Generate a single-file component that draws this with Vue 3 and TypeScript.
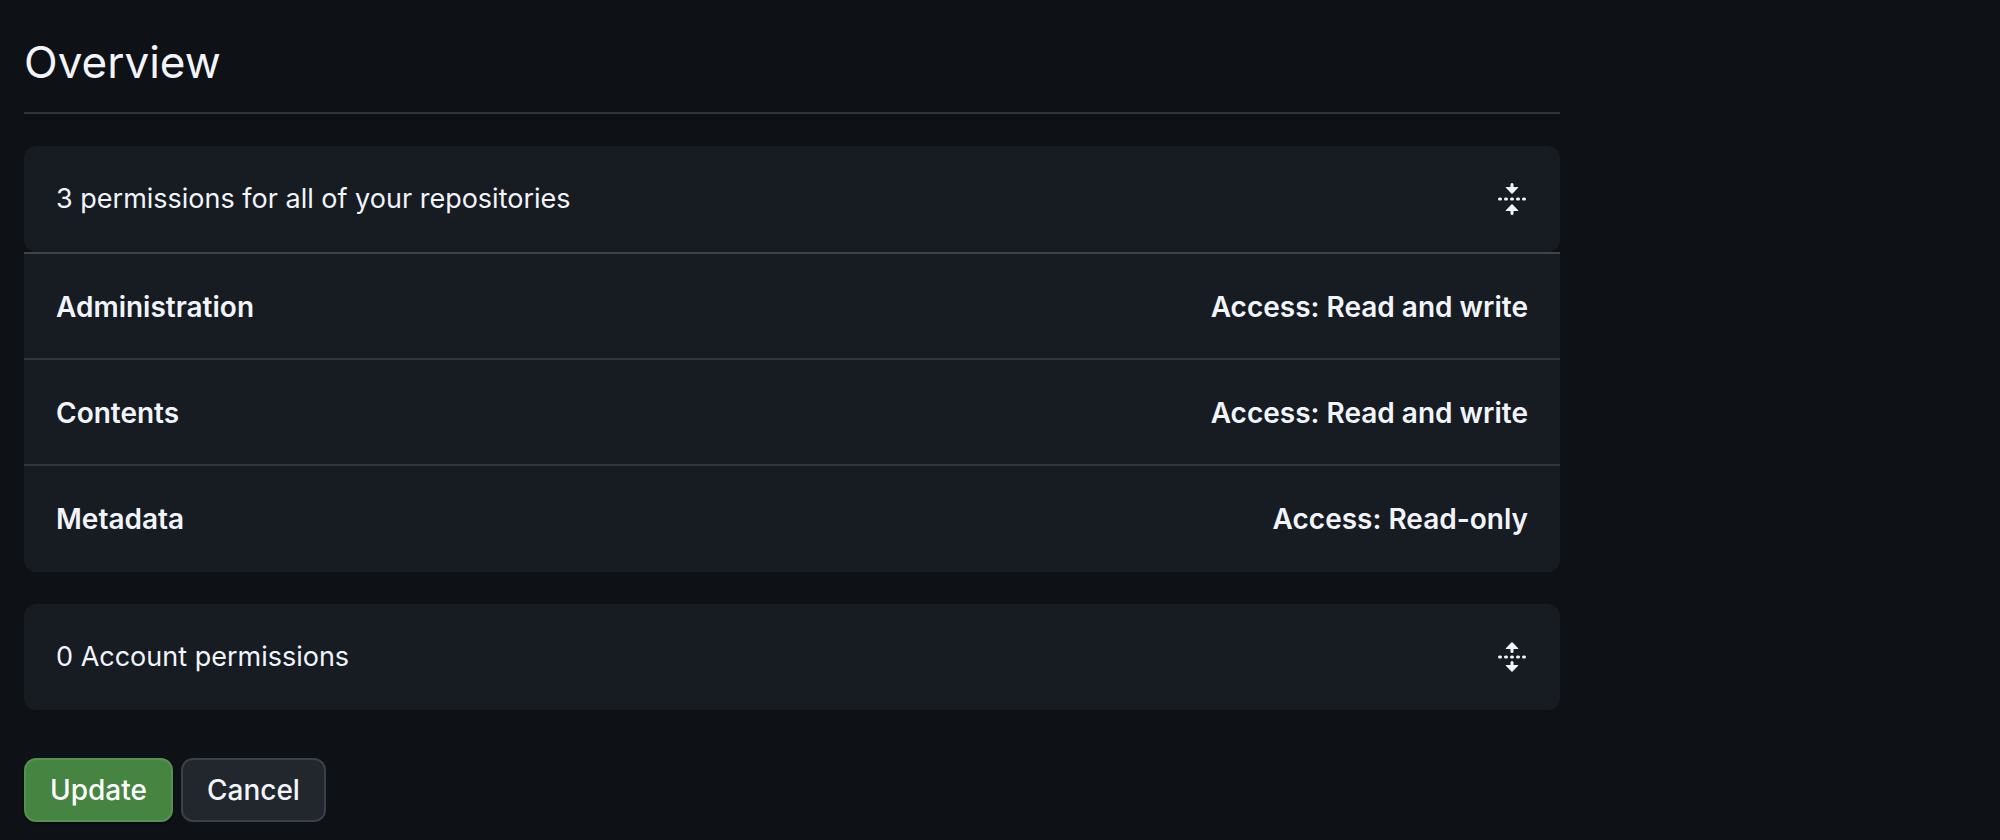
<script setup lang="ts">
import { reactive } from 'vue'

interface Permission {
  name: string
  access: string
}

interface Group {
  id: string
  title: string
  open: boolean
  permissions: Permission[]
}

const groups = reactive<Group[]>([
  {
    id: 'repository',
    title: '3 permissions for all of your repositories',
    open: true,
    permissions: [
      { name: 'Administration', access: 'Read and write' },
      { name: 'Contents', access: 'Read and write' },
      { name: 'Metadata', access: 'Read-only' },
    ],
  },
  { id: 'account', title: '0 Account permissions', open: false, permissions: [] },
])

const dots =
  'M2.25 8.75a.75.75 0 0 0 0-1.5h-.5a.75.75 0 0 0 0 1.5h.5ZM6 8a.75.75 0 0 1-.75.75h-.5a.75.75 0 0 1 0-1.5h.5A.75.75 0 0 1 6 8Zm2.25.75a.75.75 0 0 0 0-1.5h-.5a.75.75 0 0 0 0 1.5h.5ZM12 8a.75.75 0 0 1-.75.75h-.5a.75.75 0 0 1 0-1.5h.5A.75.75 0 0 1 12 8Zm2.25.75a.75.75 0 0 0 0-1.5h-.5a.75.75 0 0 0 0 1.5h.5Z'
const fold =
  'M10.896 2H8.75V.75a.75.75 0 0 0-1.5 0V2H5.104a.25.25 0 0 0-.177.427l2.896 2.896a.25.25 0 0 0 .354 0l2.896-2.896A.25.25 0 0 0 10.896 2ZM8.75 15.25a.75.75 0 0 1-1.5 0V14H5.104a.25.25 0 0 1-.177-.427l2.896-2.896a.25.25 0 0 1 .354 0l2.896 2.896a.25.25 0 0 1-.177.427H8.75v1.25Z'
const unfold =
  'm8.177.677 2.896 2.896a.25.25 0 0 1-.177.427H8.75v1.25a.75.75 0 0 1-1.5 0V4H5.104a.25.25 0 0 1-.177-.427L7.823.677a.25.25 0 0 1 .354 0ZM7.25 10.75a.75.75 0 0 1 1.5 0V12h2.146a.25.25 0 0 1 .177.427l-2.896 2.896a.25.25 0 0 1-.354 0l-2.896-2.896A.25.25 0 0 1 5.104 12H7.25v-1.25Z'
</script>

<template>
  <main class="page">
    <h2 class="title">Overview</h2>

    <section v-for="group in groups" :key="group.id" class="group">
      <button
        type="button"
        class="summary"
        :aria-expanded="group.open"
        :aria-controls="`${group.id}-list`"
        @click="group.open = !group.open"
      >
        <span>{{ group.title }}</span>
        <svg class="icon" viewBox="0 0 16 16" aria-hidden="true">
          <path :d="group.open ? fold : unfold" />
          <path :d="dots" />
        </svg>
      </button>
      <ul v-if="group.open && group.permissions.length" :id="`${group.id}-list`" class="list">
        <li v-for="item in group.permissions" :key="item.name" class="row">
          <strong>{{ item.name }}</strong>
          <strong>Access: {{ item.access }}</strong>
        </li>
      </ul>
    </section>

    <div class="actions">
      <button type="button" class="btn primary">Update</button>
      <button type="button" class="btn">Cancel</button>
    </div>
  </main>
</template>

<style>
body {
  margin: 0;
  background: #0e1116;
}
</style>

<style scoped>
.page {
  box-sizing: border-box;
  max-width: 1584px;
  padding: 24px 24px 18px;
  color: #f1f5fb;
  font-family: Inter, 'Liberation Sans', sans-serif;
  font-size: 28px;
  line-height: 42px;
}

.title {
  margin: 0 0 32px;
  padding: 0 0 12px;
  border-bottom: 2px solid #2f3439;
  font-size: 44px;
  font-weight: 400;
  line-height: 76px;
}

.group {
  margin-bottom: 32px;
}

.summary {
  display: flex;
  align-items: center;
  justify-content: space-between;
  width: 100%;
  padding: 32px;
  border: 0;
  border-radius: 12px;
  background: #171b22;
  color: inherit;
  font: inherit;
  font-size: 27px;
  text-align: left;
  cursor: pointer;
}

.icon {
  width: 32px;
  height: 32px;
  fill: currentColor;
}

.list {
  margin: 0;
  padding: 0;
  border-top: 2px solid #3f444c;
  border-radius: 0 0 12px 12px;
  background: #171b22;
  list-style: none;
}

.row {
  display: flex;
  justify-content: space-between;
  gap: 32px;
  padding: 32px 32px 30px;
  border-bottom: 2px solid #30353c;
}

.row:last-child {
  border-bottom-color: transparent;
}

.row strong {
  font-weight: 600;
}

.actions {
  display: flex;
  gap: 8px;
  margin-top: 48px;
}

.btn {
  padding: 10px 24px;
  border: 2px solid #3b4149;
  border-radius: 12px;
  background: #22272e;
  color: inherit;
  font: inherit;
  font-weight: 500;
  line-height: 40px;
  cursor: pointer;
}

.primary {
  border-color: #579151;
  background: #458541;
  color: #ffffff;
  box-shadow: 0 2px 2px rgba(0, 0, 0, 0.4);
}
</style>
